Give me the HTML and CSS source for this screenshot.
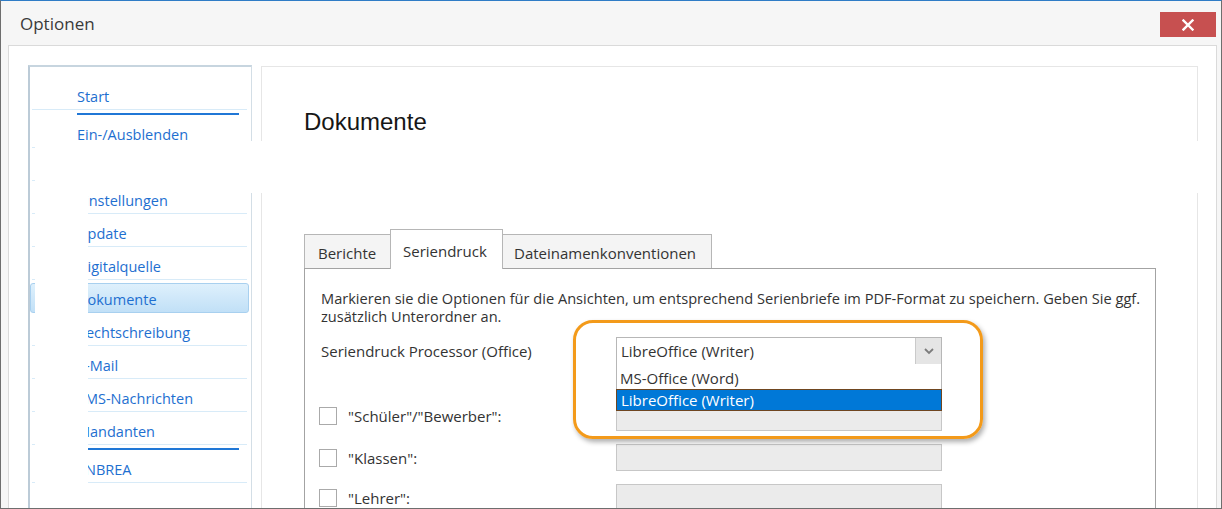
FILE: index.html
```html
<!DOCTYPE html>
<html lang="de">
<head>
<meta charset="utf-8">
<title>Optionen</title>
<link rel="stylesheet" href="styles.css">
</head>
<body>
<div class="window">
  <div class="titlebar">
    <span class="title">Optionen</span>
    <button class="close" aria-label="Schließen">
      <svg width="12" height="12" viewBox="0 0 12 12"><path d="M1.5 1.5 L10.5 10.5 M10.5 1.5 L1.5 10.5" stroke="#fff" stroke-width="2.4" stroke-linecap="square" fill="none"/></svg>
    </button>
  </div>
  <div class="content">
    <nav class="sidenav">
      <div class="item">Start</div>
      <div class="rule"></div>
      <div class="item">Ein-/Ausblenden</div>
      <div class="item"></div>
      <div class="item">Einstellungen</div>
      <div class="item">Update</div>
      <div class="item">Digitalquelle</div>
      <div class="item sel">Dokumente</div>
      <div class="item">Rechtschreibung</div>
      <div class="item">E-Mail</div>
      <div class="item">SMS-Nachrichten</div>
      <div class="item">Mandanten</div>
      <div class="rule"></div>
      <div class="item">ENBREA</div>
    </nav>
    <main class="page">
      <h1 class="heading">Dokumente</h1>
      <div class="tabs">
        <div class="tab tab-berichte">Berichte</div>
        <div class="tab tab-active">Seriendruck</div>
        <div class="tab tab-dateinamen">Dateinamenkonventionen</div>
      </div>
      <div class="tabpanel">
        <p class="intro">Markieren sie die Optionen für die Ansichten, um entsprechend Serienbriefe im PDF-Format zu speichern. Geben Sie ggf.<br>zusätzlich Unterordner an.</p>
        <div class="row row-combo">
          <div class="lbl">Seriendruck Processor (Office)</div>
          <div class="combo">
            <span class="combo-text">LibreOffice (Writer)</span>
            <span class="combo-btn">
              <svg width="10" height="7" viewBox="0 0 10 7"><path d="M1 1 L5 5 L9 1" stroke="#7c7c7c" stroke-width="1.8" fill="none"/></svg>
            </span>
            <div class="list">
              <div class="opt">MS-Office (Word)</div>
              <div class="opt opt-sel">LibreOffice (Writer)</div>
            </div>
          </div>
        </div>
        <div class="row row-first">
          <div class="lbl"><span class="check"></span>"Schüler"/"Bewerber":</div>
          <div class="field"></div>
        </div>
        <div class="row">
          <div class="lbl"><span class="check"></span>"Klassen":</div>
          <div class="field"></div>
        </div>
        <div class="row">
          <div class="lbl"><span class="check"></span>"Lehrer":</div>
          <div class="field"></div>
        </div>
        <div class="highlight"></div>
      </div>
    </main>
  </div>
  <div class="tear"></div>
  <div class="tear-strip"></div>
</div>
</body>
</html>
```
FILE: styles.css
```css
html, body {
  margin: 0;
  padding: 0;
  background: #ffffff;
}
body {
  width: 1222px;
  height: 509px;
  overflow: hidden;
  font-family: "Open Sans", "Noto Sans", sans-serif;
  color: #333333;
}
.window {
  position: relative;
  box-sizing: border-box;
  width: 1222px;
  height: 509px;
  border: 1px solid #6e6e6e;
  border-top-color: #2f7cc6;
  background: #f6f6f6;
  display: flex;
  flex-direction: column;
}
.titlebar {
  height: 44px;
  flex: none;
  display: flex;
  align-items: center;
  padding-left: 19px;
}
.title {
  font-size: 17px;
  color: #3a3a3a;
}
.close {
  margin-left: auto;
  margin-right: 5px;
  align-self: flex-start;
  margin-top: 11px;
  width: 56px;
  height: 25px;
  border: none;
  padding: 0;
  background: #c75050;
  display: flex;
  align-items: center;
  justify-content: center;
}
.content {
  flex: 1;
  min-height: 0;
  overflow: hidden;
  margin: 0 4px 0 7px;
  border: 1px solid #dadada;
  border-bottom: none;
  background: #ffffff;
  display: flex;
  padding: 19px 18px 0 19px;
}
.sidenav {
  width: 224px;
  box-sizing: border-box;
  flex: none;
  border-left: 2px solid #bccbd7;
  border-top: 2px solid #c7d5df;
  border-right: 1px solid #d3dee6;
  padding-top: 10px;
  font-size: 14.5px;
  color: #1e6fd0;
}
.item {
  height: 33px;
  box-sizing: border-box;
  margin: 0 4px 0 2px;
  padding: 10px 0 0 45px;
  line-height: 20px;
  border-bottom: 1px solid #d8ebf8;
  white-space: nowrap;
  overflow: hidden;
}
.item.sel {
  margin: 3px 2px 0 0;
  height: 30px;
  padding: 6px 0 0 46px;
  border: 1px solid #a8d0ef;
  border-radius: 3px;
  background: linear-gradient(#def0fc, #c1e0f7);
}
.rule {
  height: 2px;
  background: #2077d6;
  margin: 3px 12px 0 47px;
}
.page {
  flex: 1;
  margin-left: 9px;
  margin-top: 1px;
  border: 1px solid #e6e6e6;
  border-bottom: none;
  padding: 41px 41px 0 42px;
  display: flex;
  flex-direction: column;
  min-width: 0;
}
.heading {
  margin: 0;
  font-family: "Liberation Sans", Arial, sans-serif;
  font-weight: normal;
  font-size: 24px;
  line-height: 28px;
  color: #161616;
}
.tabs {
  margin-top: 93px;
  height: 39px;
  display: flex;
  align-items: flex-end;
}
.tab {
  box-sizing: border-box;
  height: 34px;
  border: 1px solid #b6b6b6;
  border-bottom: none;
  background: #f4f4f4;
  padding: 8px 0 0 13px;
  font-size: 15px;
  line-height: 20px;
  color: #333333;
  white-space: nowrap;
}
.tab-berichte {
  width: 87px;
}
.tab-active {
  position: relative;
  z-index: 1;
  width: 113px;
  height: 40px;
  margin-left: -1px;
  margin-bottom: -1px;
  padding: 11px 0 0 12px;
  background: #ffffff;
}
.tab-dateinamen {
  width: 210px;
  margin-left: -1px;
  padding-left: 11px;
}
.tabpanel {
  position: relative;
  flex: 1;
  border: 1px solid #a3a3a3;
  border-bottom: none;
  padding: 20px 16px 0 16px;
  font-size: 15px;
  color: #333333;
}
.intro {
  margin: 0;
  font-size: 14.6px;
  line-height: 18px;
  white-space: nowrap;
}
.row {
  display: flex;
  align-items: center;
  height: 27px;
  margin-top: 13px;
}
.row-combo {
  height: 28px;
  margin-top: 12px;
}
.row-first {
  margin-top: 39px;
}
.lbl {
  width: 295px;
  flex: none;
  display: flex;
  align-items: center;
  white-space: nowrap;
  line-height: 20px;
}
.row-first .lbl {
  margin-top: -4px;
}
.check {
  width: 18px;
  height: 18px;
  box-sizing: border-box;
  border: 1px solid #aaaaaa;
  background: #ffffff;
  margin-left: -2px;
  margin-right: 11px;
  flex: none;
}
.field {
  width: 326px;
  height: 27px;
  box-sizing: border-box;
  border: 1px solid #c7c7c7;
  background: #ebebeb;
}
.combo {
  position: relative;
  z-index: 2;
  width: 326px;
  height: 28px;
  box-sizing: border-box;
  border: 1px solid #b7b7b7;
  background: #ffffff;
  display: flex;
}
.combo-text {
  flex: 1;
  padding-left: 4px;
  line-height: 26px;
  white-space: nowrap;
}
.combo-btn {
  width: 25px;
  flex: none;
  background: #e5e5e5;
  border-left: 1px solid #cacaca;
  display: flex;
  align-items: center;
  justify-content: center;
}
.list {
  position: absolute;
  top: 26px;
  left: -1px;
  width: 326px;
  box-sizing: border-box;
  border: 1px solid #b7b7b7;
  border-top: none;
  border-bottom: none;
  background: #ffffff;
}
.opt {
  height: 25px;
  line-height: 28px;
  padding-left: 3px;
  white-space: nowrap;
}
.opt-sel {
  height: 22px;
  box-sizing: border-box;
  margin: 0 -1px;
  line-height: 21px;
  padding-left: 4px;
  border: 1px solid #6f4620;
  background: #0078d7;
  color: #ffffff;
}
.highlight {
  position: absolute;
  z-index: 3;
  left: 268px;
  top: 51px;
  width: 410px;
  height: 119px;
  box-sizing: border-box;
  border: 3px solid #f39a1a;
  border-radius: 20px;
  box-shadow: 2px 3px 5px rgba(0, 0, 0, 0.32);
}
.tear {
  position: absolute;
  left: 34px;
  top: 140px;
  width: 1179px;
  height: 52px;
  background: #ffffff;
}
.tear-strip {
  position: absolute;
  left: 34px;
  top: 192px;
  width: 53px;
  height: 315px;
  background: #ffffff;
}
```
